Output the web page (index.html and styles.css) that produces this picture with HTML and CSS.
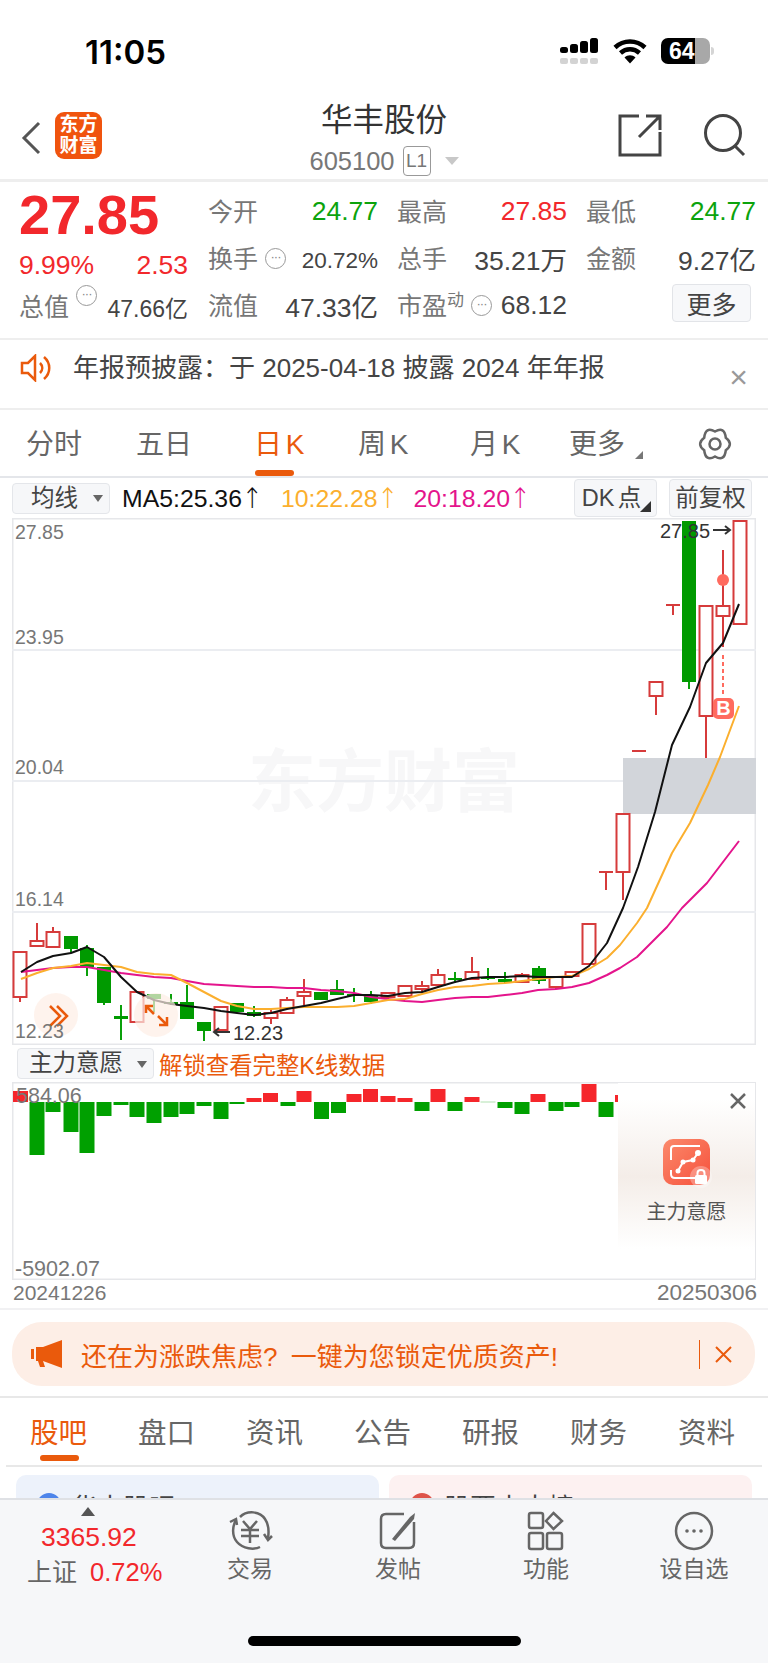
FILE: index.html
```html
<!DOCTYPE html>
<html lang="zh-CN">
<head>
    <meta charset="UTF-8">
    <meta name="viewport" content="width=device-width, initial-scale=1.0">
    <title>华丰股份 605100</title>
    <link rel="stylesheet" href="styles.css">
</head>
<body>
<div class="page">
    <!-- status bar -->
    <div class="status-bar">
        <div class="clock">11:05</div>
        <div class="status-icons">
            <div class="signal">
                <div class="signal-row">
                    <i class="s1"></i><i class="s2"></i><i class="s3"></i><i class="s4"></i>
                </div>
                <div class="signal-ghost"><i></i><i></i><i></i><i></i></div>
            </div>
            <svg class="wifi" width="34" height="26" viewBox="0 0 34 26">
                <path d="M2 9.5C10.500 1.500 23.500 1.500 32 9.500" />
                <path d="M7.500 15C13 10 21 10 26.500 15" />
                <path class="wifi-dot" d="M11.500 19.500C14.500 16.500 19.500 16.500 22.500 19.500L17 25.500Z" />
            </svg>
            <div class="battery"><span>64</span></div>
            <div class="battery-tip"></div>
        </div>
    </div>

    <!-- title -->
    <div class="header">
        <div class="header-left">
            <svg width="20" height="34" viewBox="0 0 20 34" class="back"><path d="M18 2L3 17L18 32" /></svg>
            <div class="logo">东方<br>财富</div>
        </div>
        <div class="header-center">
            <div class="stock-name">华丰股份</div>
            <div class="stock-code">
                <span>605100</span>
                <span class="level">L1</span>
                <span class="caret-down"></span>
            </div>
        </div>
        <div class="header-right">
            <svg class="icon-share" width="44" height="44" viewBox="0 0 44 44">
                <path d="M21 2H2V41H42V18" />
                <path d="M21 23L42 2M28 2H42V16" />
            </svg>
            <svg class="icon-search" width="44" height="44" viewBox="0 0 44 44">
                <circle cx="20" cy="19" r="17.500" />
                <path d="M32 32L41 41" />
            </svg>
        </div>
    </div>

    <!-- quote -->
    <div class="quote">
        <div class="quote-left">
            <div class="price">27.85</div>
            <div class="change"><span>9.99%</span><span>2.53</span></div>
            <div class="cap">
                <span class="label">总值</span><span class="info">···</span>
                <span class="val-small">47.66亿</span>
            </div>
        </div>
        <div class="quote-grid">
            <div class="cell"><span class="label">今开</span><span class="green">24.77</span></div>
            <div class="cell"><span class="label">最高</span><span class="red">27.85</span></div>
            <div class="cell"><span class="label">最低</span><span class="green">24.77</span></div>

            <div class="cell"><span class="label">换手<span class="info info-up">···</span></span><span class="val-turnover">20.72%</span></div>
            <div class="cell"><span class="label">总手</span><span>35.21万</span></div>
            <div class="cell"><span class="label">金额</span><span>9.27亿</span></div>

            <div class="cell"><span class="label">流值</span><span>47.33亿</span></div>
            <div class="cell"><span class="label">市盈<sup>动</sup><span class="info info-up">···</span></span><span>68.12</span></div>
            <div class="cell cell-more"><button class="more-btn">更多</button></div>
        </div>
    </div>

    <!-- notice -->
    <div class="notice">
        <svg width="34" height="28" viewBox="0 0 34 28" class="speaker">
            <path d="M2 9H8L15 2V26L8 19H2Z" />
            <path d="M20 9C23 12 23 16 20 19M24 3C31 9 31 19 24 25" />
        </svg>
        <div class="notice-text">年报预披露：于 2025-04-18 披露 2024 年年报</div>
        <div class="notice-close">×</div>
    </div>

    <!-- period tabs -->
    <div class="period-tabs">
        <div class="period">分时</div>
        <div class="period">五日</div>
        <div class="period active">日 K</div>
        <div class="period">周 K</div>
        <div class="period">月 K</div>
        <div class="period period-more">更多</div>
        <svg class="gear" width="36" height="36" viewBox="-18 -18 36 36">
            <path d="M0-12.500Q9.500-18 10.800-6.250Q19 0 10.800 6.250Q9.500 18 0 12.500Q-9.500 18-10.800 6.250Q-19 0-10.800-6.250Q-9.500-18 0-12.500Z" />
            <circle r="5.500" />
        </svg>
    </div>

    <!-- moving averages bar -->
    <div class="ma-bar">
        <div class="select select-ma">均线</div>
        <div class="ma ma5">MA5:25.36<em>↑</em></div>
        <div class="ma ma10">10:22.28<em>↑</em></div>
        <div class="ma ma20">20:18.20<em>↑</em></div>
        <div class="ma-btn ma-btn-dk">DK 点</div>
        <div class="ma-btn">前复权</div>
    </div>

    <!-- k line chart -->
    <svg class="kline" width="744" height="527" viewBox="12 518 744 527">
        <rect class="frame" x="12.750" y="518.750" width="742.500" height="525.500" />
        <text class="watermark" x="248" y="806">东方财富</text>
        <path class="grid" d="M12 650H756M12 781H756M12 912H756" />
        <rect class="zone" x="623" y="758" width="133" height="56" />

        <text class="axis" x="15" y="539">27.85</text>
        <text class="axis" x="15" y="644">23.95</text>
        <text class="axis" x="15" y="774">20.04</text>
        <text class="axis" x="15" y="906">16.14</text>

        <!-- falling candles -->
        <path class="wick-down" d="M71 949V953M87 945V976M104 1003V1005M121 1005V1040M154 994V1012M171 994V1005M187 985V1019M204 1031V1041M254 1006V1017M337 980V995M354 988V1002M371 991V1004M455 972V983M488 968V980M505 972V983M539 966V984M689 682V689" />
        <path class="body-down" d="M64 936h14v13h-14zM80 948h14v19h-14zM97 967h14v36h-14zM114 1016h14v3h-14zM147 994h14v5h-14zM164 1002h14v2h-14zM180 1002h14v17h-14zM197 1022h14v9h-14zM230 1003h14v9h-14zM247 1012h14v4h-14zM314 992h14v8h-14zM330 989h14v6h-14zM347 994h14v2h-14zM364 995h14v7h-14zM448 978h14v2h-14zM481 977h14v2h-14zM498 979h14v3h-14zM532 968h14v13h-14zM682 521h14v161h-14z" />

        <!-- rising candles -->
        <path class="wick-up" d="M20 997V1002M37 923V947M53 927V932M271 1009V1024M287 997V1000M304 979V1005M388 992V1001M422 981V992M438 969V975M472 957V972M522 973V983M556 987V989M606 872V890M623 872V900M656 696V715M673 605V615M706 716V758M723 550V647M599 872H613M632 751H646M666 605H680" />
        <path class="body-up" d="M13.500 952h13v45h-13zM30.500 941h13v5h-13zM46.500 932h13v15h-13zM130.500 992h13v30h-13zM214.500 1007h13v23h-13zM264.500 1013h13v5h-13zM280.500 1000h13v13h-13zM297.500 992h13v4h-13zM381.500 993h13v4h-13zM398.500 986h13v10h-13zM415.500 986h13v3h-13zM431.500 975h13v10h-13zM465.500 972h13v7h-13zM515.500 975h13v7h-13zM549.500 977h13v10h-13zM565.500 972h13v4h-13zM582.500 924h13v40h-13zM616.500 814h13v58h-13zM649.500 682h13v14h-13zM699.500 606h13v110h-13zM716.500 606h13v10h-13zM733.500 521h13v103h-13z" />

        <polyline class="line-pink" points="21,972 37,970 53,968 71,967 87,967 104,970 121,973 137,975 154,977 171,978 187,981 204,984 221,985 237,986 254,987 271,987 287,988 304,988 321,990 337,991 354,993 371,997 387,999 405,1001 422,1002 438,1000 455,998 472,997 488,997 505,995 522,993 538,990 556,989 572,987 589,983 607,975 620,968 637,957 652,942 667,927 682,908 707,883 739,841" />
        <polyline class="line-orange" points="21,979 37,973 53,968 71,966 87,963 104,965 121,967 137,972 154,974 171,975 187,983 204,992 221,1001 237,1006 254,1009 271,1009 287,1008 304,1007 321,1007 337,1007 354,1006 371,1003 388,1000 405,999 422,994 438,990 455,987 472,986 488,984 505,983 522,981 538,979 556,977 572,976 589,969 607,958 620,945 637,923 647,908 672,853 690,823 708,785 720,757 739,706" />
        <polyline class="line-black" points="21,972 37,962 53,956 71,953 87,947 104,957 121,977 137,992 154,1000 171,1004 187,1006 204,1008 221,1011 237,1013 254,1015 271,1013 287,1009 304,1006 321,1003 337,999 354,995 371,995 388,996 405,993 422,992 438,987 455,982 472,978 488,977 505,977 522,976 538,977 556,977 572,977 589,966 607,943 623,908 638,867 655,812 672,745 690,707 706,663 723,643 739,604" />

        <!-- high, low and buy marks -->
        <text class="mark" x="660" y="538">27.85</text>
        <path class="mark-arrow" d="M713 530H730M725 526L730 530L725 534" />
        <text class="mark" x="233" y="1040">12.23</text>
        <path class="mark-arrow" d="M230 1032H214M219 1028L214 1032L219 1036" />
        <circle class="buy-dot" cx="723" cy="580" r="6" />
        <path class="buy-dash" d="M723 655V697" />
        <rect class="buy-badge" x="713" y="698" width="21" height="21" rx="5" />
        <text class="buy-text" x="723.500" y="715">B</text>

        <circle class="round-btn" cx="56" cy="1015" r="22" />
        <path class="round-arrow" d="M50 1006L60 1016L50 1026M57 1006L67 1016L57 1026" />
        <circle class="round-btn" cx="156" cy="1015" r="22" />
        <path class="round-arrow" d="M146 1013V1006H153M146 1006L154 1014M167 1017V1025H159M167 1025L158 1016" />
        <text class="axis" x="15" y="1038">12.23</text>
    </svg>

    <!-- indicator selector -->
    <div class="indicator-bar">
        <div class="select select-ind">主力意愿</div>
        <div class="unlock">解锁查看完整K线数据</div>
    </div>

    <!-- indicator chart -->
    <div class="sub-chart">
        <svg class="sub-plot" width="744" height="198" viewBox="12 1082 744 198">
            <rect class="frame" x="12.750" y="1082.750" width="742.500" height="196.500" />
            <path class="bar-red" d="M13 1091h15v11h-15zM246.500 1098h15v4h-15zM263 1093h15v9h-15zM296.500 1091h15v11h-15zM346.500 1094h15v8h-15zM363 1089h15v13h-15zM380.500 1096h15v6h-15zM397.500 1098h15v4h-15zM430.500 1089h15v13h-15zM464.500 1097h15v5h-15zM530.500 1094h15v8h-15zM581.500 1084h15v18h-15zM615 1095h3v7h-3z" />
            <path class="bar-green" d="M29.500 1102h15v53h-15zM45.500 1102h15v10h-15zM63.500 1102h15v30h-15zM79.500 1102h15v51h-15zM96.500 1102h15v14h-15zM113.500 1102h15v3h-15zM129.500 1102h15v15h-15zM146.500 1102h15v21h-15zM163.500 1102h15v15h-15zM179.500 1102h15v12h-15zM196.500 1102h15v4h-15zM213.500 1102h15v17h-15zM229.500 1102h15v2h-15zM280.500 1102h15v4h-15zM314 1102h15v17h-15zM331 1102h15v11h-15zM414.500 1102h15v9h-15zM447.500 1102h15v9h-15zM497.500 1102h15v6h-15zM514.500 1102h15v12h-15zM548.500 1102h15v9h-15zM564.500 1102h15v5h-15zM598.500 1102h15v15h-15z" />
            <path class="bar-pale" d="M480.500 1101h15v2h-15z" />
            <text class="axis axis-big" x="16" y="1103">584.06</text>
            <text class="axis axis-big" x="15" y="1276">-5902.07</text>
        </svg>
        <div class="locked">
            <svg class="locked-close" width="16" height="16" viewBox="0 0 16 16"><path d="M1 1L15 15M15 1L1 15" /></svg>
            <svg class="locked-icon" width="50" height="50" viewBox="0 0 50 50">
                <defs>
                    <linearGradient id="lockBg" x1="0" y1="0" x2="1" y2="1">
                        <stop offset="0" stop-color="#fb8a6c" />
                        <stop offset="1" stop-color="#f6503b" />
                    </linearGradient>
                </defs>
                <rect width="47" height="46" rx="10" fill="url(#lockBg)" />
                <path class="lock-frame" d="M8 21V10Q8 7 11 7H37M37 39H12Q8 39 8 35V31" />
                <path class="lock-line" d="M15 32L20 23L30 21L35 14" />
                <circle class="lock-dot" cx="15" cy="32" r="2.500" />
                <circle class="lock-dot" cx="20" cy="23" r="2.500" />
                <circle class="lock-dot" cx="30" cy="21" r="2.500" />
                <circle class="lock-dot" cx="35" cy="14" r="3" />
                <circle class="lock-ring" cx="38" cy="38" r="11" />
                <rect class="lock-dot" x="32" y="36" width="12" height="9" rx="1.500" />
                <path class="lock-shackle" d="M34.500 36V34Q34.500 31 38 31Q41.500 31 41.500 34V36" />
            </svg>
            <div class="locked-name">主力意愿</div>
        </div>
    </div>

    <div class="dates"><span>20241226</span><span class="date-end">20250306</span></div>

    <!-- promo -->
    <div class="promo-wrap">
        <div class="promo">
            <svg width="32" height="28" viewBox="0 0 32 28" class="horn">
                <path d="M0 9H3V19H0ZM5 7H12L31 0V28L12 21L14 27H9L7 21H5Z" />
            </svg>
            <div class="promo-text">还在为涨跌焦虑? 一键为您锁定优质资产!</div>
            <div class="promo-close">
                <svg width="17" height="17" viewBox="0 0 17 17"><path d="M1 1L16 16M16 1L1 16" /></svg>
            </div>
        </div>
    </div>

    <!-- content tabs -->
    <div class="content-tabs">
        <div class="content-tab active">股吧</div>
        <div class="content-tab">盘口</div>
        <div class="content-tab">资讯</div>
        <div class="content-tab">公告</div>
        <div class="content-tab">研报</div>
        <div class="content-tab">财务</div>
        <div class="content-tab">资料</div>
    </div>

    <div class="cards">
        <div class="card card-blue"><i></i><span>华丰股吧</span></div>
        <div class="card card-pink"><i></i><span>股票十大榜</span></div>
    </div>

    <!-- bottom bar -->
    <div class="footer">
        <div class="index-col">
            <div class="caret-up"></div>
            <div class="index-value">3365.92</div>
            <div class="index-line"><span>上证</span><span class="index-pct">0.72%</span></div>
        </div>
        <div class="foot-item">
            <svg width="46" height="40" viewBox="0 0 46 40">
                <path d="M9 9C6 14 4 24 10 31C16 38 27 39 33 36" />
                <path d="M13 6C20-1 33 0 38 8C42 14 42 21 41 27" />
                <path class="fill-stroke" d="M3 11L9 8L10 14" />
                <path class="fill-stroke" d="M37 23L41 29L45 25" />
                <path d="M16 10L23 18L30 10M14 19H32M14 25H32M23 18V32" />
            </svg>
            <div class="foot-label">交易</div>
        </div>
        <div class="foot-item">
            <svg width="40" height="40" viewBox="0 0 40 40">
                <path d="M26 3H8Q3 3 3 8V32Q3 37 8 37H31Q36 37 36 32V11" />
                <path class="pencil" d="M14 28L32 6L37 2L36 8L17 30Z" />
            </svg>
            <div class="foot-label">发帖</div>
        </div>
        <div class="foot-item">
            <svg width="38" height="40" viewBox="0 0 38 40">
                <rect x="2" y="2" width="14" height="15" rx="2" />
                <path d="M26.500 2L35 10L26.500 18L19 10Z" />
                <rect x="2" y="22" width="14" height="16" rx="2" />
                <rect x="20" y="22" width="15" height="16" rx="2" />
            </svg>
            <div class="foot-label">功能</div>
        </div>
        <div class="foot-item">
            <svg width="40" height="40" viewBox="0 0 40 40">
                <circle cx="20" cy="20" r="18" />
                <circle class="dot" cx="13" cy="20" r="1.800" />
                <circle class="dot" cx="20" cy="20" r="1.800" />
                <circle class="dot" cx="27" cy="20" r="1.800" />
            </svg>
            <div class="foot-label">设自选</div>
        </div>
        <div class="home-bar"></div>
    </div>
</div>
</body>
</html>
```

FILE: styles.css
```css
* {
    box-sizing: border-box;
}
body {
    margin: 0;
    background: #fff;
    font-family: "Liberation Sans", "Noto Sans CJK SC", sans-serif;
    color: #444;
}
.page {
    width: 768px;
    height: 1663px;
    overflow: hidden;
    position: relative;
}

/* status bar */
.status-bar {
    height: 92px;
    display: flex;
    justify-content: space-between;
    padding: 35px 54px 0 85px;
}
.clock {
    font-family: Inter, "Liberation Sans", sans-serif;
    font-size: 33px;
    font-weight: 600;
    line-height: 34px;
    color: #000;
}
.status-icons {
    display: flex;
    align-items: flex-start;
    padding-top: 3px;
}
.signal {
    width: 38px;
    margin-right: 15px;
}
.signal-row {
    display: flex;
    align-items: flex-end;
    justify-content: space-between;
    height: 15px;
}
.signal-row i {
    width: 8px;
    background: #000;
    border-radius: 2.5px;
}
.s1 { height: 6px; }
.s2 { height: 9px; }
.s3 { height: 12px; }
.s4 { height: 15px; }
.signal-ghost {
    display: flex;
    justify-content: space-between;
    margin-top: 5px;
}
.signal-ghost i {
    width: 8px;
    height: 6px;
    background: #d3d3d3;
    border-radius: 2px;
}
.wifi {
    margin-right: 14px;
}
.wifi path {
    fill: none;
    stroke: #000;
    stroke-width: 4.5px;
}
.wifi .wifi-dot {
    fill: #000;
    stroke: none;
}
.battery {
    width: 49px;
    height: 26px;
    border-radius: 7px;
    background: linear-gradient(90deg, #000 70%, #a8a8a8 70%);
    color: #fff;
    font-size: 23px;
    font-weight: bold;
    line-height: 26px;
    padding-left: 8px;
}
.battery-tip {
    width: 3px;
    height: 8px;
    margin: 9px 0 0 1px;
    background: #d5d5d5;
    border-radius: 0 3px 3px 0;
}

/* header */
.header {
    height: 90px;
    display: grid;
    grid-template-columns: 1fr auto 1fr;
    border-bottom: 3px solid #eeeeee;
}
.header-left {
    display: flex;
    align-items: flex-start;
    padding: 20px 0 0 21px;
}
.back {
    margin: 9px 14px 0 0;
}
.back path {
    fill: none;
    stroke: #555;
    stroke-width: 3px;
}
.logo {
    width: 47px;
    height: 47px;
    background: #f0540e;
    border-radius: 9px;
    color: #fff;
    font-size: 19px;
    font-weight: bold;
    line-height: 21px;
    text-align: center;
    padding-top: 2px;
}
.header-center {
    text-align: center;
    padding-top: 9px;
}
.stock-name {
    font-size: 31.500px;
    line-height: 38px;
    color: #333;
}
.stock-code {
    display: flex;
    align-items: center;
    height: 30px;
    margin-top: 7px;
    color: #777;
    font-size: 25.500px;
}
.level {
    width: 28px;
    height: 30px;
    border: 1px solid #999;
    border-radius: 4px;
    font-size: 19px;
    line-height: 28px;
    margin: 0 14px 0 8px;
}
.caret-down {
    border-top: 8px solid #c8c8c8;
    border-left: 7px solid transparent;
    border-right: 7px solid transparent;
}
.header-right {
    display: flex;
    justify-content: flex-end;
    gap: 41px;
    padding: 22px 21px 0 0;
}
.header-right svg {
    fill: none;
    stroke: #444;
    stroke-width: 3px;
}

/* quote block */
.quote {
    height: 158px;
    display: flex;
    padding-left: 19px;
    border-bottom: 2px solid #eeeeee;
}
.quote-left {
    width: 169px;
    margin-right: 20px;
}
.price {
    font-size: 56px;
    font-weight: bold;
    line-height: 50px;
    margin-top: 8px;
    color: #f2282c;
}
.change {
    display: flex;
    justify-content: space-between;
    margin-top: 9px;
    font-size: 26.500px;
    line-height: 32px;
    color: #f2282c;
}
.cap {
    display: flex;
    align-items: center;
    margin-top: 6px;
    line-height: 36px;
}
.val-small {
    margin-left: auto;
    font-size: 23px;
    padding-top: 4px;
}
.quote-grid {
    width: 548px;
    display: grid;
    grid-template-columns: repeat(3, 170px);
    grid-auto-rows: 47px;
    column-gap: 19px;
    padding-top: 6px;
    font-size: 26.500px;
    color: #444;
}
.cell {
    display: flex;
    justify-content: space-between;
    align-items: center;
}
.cell .label {
    margin-top: -4px;
}
.label {
    font-size: 25px;
    color: #777;
    white-space: nowrap;
}
.label sup {
    font-size: 17px;
    line-height: 0;
}
.info {
    display: inline-block;
    width: 21px;
    height: 21px;
    margin-left: 7px;
    border: 1.500px solid #999;
    border-radius: 50%;
    color: #888;
    font-size: 13px;
    line-height: 15px;
    text-align: center;
    letter-spacing: -1px;
}
.cap .info {
    align-self: flex-start;
    margin-top: -2px;
}
.info-up {
    vertical-align: 7px;
}
.val-turnover {
    font-size: 22.500px;
    padding-top: 4px;
}
.green {
    color: #0ca30c;
}
.red {
    color: #f2282c;
}
.cell-more {
    justify-content: flex-end;
    padding-right: 5px;
}
.more-btn {
    width: 79px;
    height: 38px;
    margin-top: -6px;
    padding: 0;
    border: 1px solid #e2e4e8;
    border-radius: 4px;
    background: #f7f8fa;
    color: #444;
    font-family: inherit;
    font-size: 25px;
}

/* notice */
.notice {
    height: 70px;
    display: flex;
    align-items: flex-start;
    padding: 14px 20px 0 20px;
    border-bottom: 2px solid #eeeeee;
}
.speaker {
    fill: none;
    stroke: #ea5a0c;
    stroke-width: 2.500px;
    margin-right: 19px;
}
.notice-text {
    font-size: 26px;
    line-height: 28px;
    color: #444;
}
.notice-close {
    margin-left: auto;
    font-size: 32px;
    line-height: 30px;
    padding-top: 8px;
    color: #999;
}

/* period tabs */
.period-tabs {
    height: 68px;
    display: grid;
    grid-template-columns: 110px 118px 104px 112px 99px 128px auto;
    padding-left: 26px;
    border-bottom: 2px solid #e4e6ea;
    position: relative;
}
.period {
    font-size: 28px;
    line-height: 70px;
    word-spacing: -4px;
    color: #666;
}
.period.active {
    color: #ea5a0c;
    position: relative;
}
.period.active::after {
    content: "";
    position: absolute;
    left: 1px;
    bottom: 4px;
    width: 39px;
    height: 6px;
    border-radius: 3px;
    background: #ea5a0c;
}
.period-more {
    position: relative;
}
.period-more::after {
    content: "";
    position: absolute;
    left: 66px;
    top: 41px;
    border-bottom: 8px solid #777;
    border-left: 8px solid transparent;
}
.gear {
    margin-top: 16px;
    fill: none;
    stroke: #666;
    stroke-width: 2.500px;
}

/* moving averages */
.ma-bar {
    height: 40px;
    display: flex;
    align-items: center;
    padding-left: 12px;
}
.select {
    position: relative;
    background: #f6f7f9;
    border: 1px solid #e4e6ea;
    border-radius: 4px;
    color: #444;
    font-size: 23.500px;
}
.select::after {
    content: "";
    position: absolute;
    top: 50%;
    right: 6px;
    margin-top: -3px;
    border-top: 7px solid #666;
    border-left: 5px solid transparent;
    border-right: 5px solid transparent;
}
.select-ma {
    width: 98px;
    height: 31px;
    padding-left: 18px;
    line-height: 29px;
}
.ma {
    font-size: 24.800px;
    white-space: nowrap;
}
.ma em {
    font-style: normal;
    font-family: "DejaVu Sans", sans-serif;
    font-weight: 200;
    display: inline-block;
    width: 18px;
    text-align: center;
    transform: scaleY(1.150);
}
.ma5 {
    margin-left: 12px;
    color: #111;
}
.ma10 {
    margin-left: 21px;
    color: #fbaf2e;
}
.ma20 {
    margin-left: 18px;
    color: #e4148c;
}
.ma-btn {
    position: relative;
    width: 83px;
    height: 38px;
    margin-left: 12px;
    background: #f6f7f9;
    border: 1px solid #e4e6ea;
    border-radius: 4px;
    font-size: 23.500px;
    line-height: 36px;
    text-align: center;
    color: #444;
}
.ma-btn-dk {
    margin-left: auto;
    padding-right: 8px;
    word-spacing: -3px;
}
.ma-btn-dk::after {
    content: "";
    position: absolute;
    right: 5px;
    bottom: 4px;
    border-bottom: 11px solid #333;
    border-left: 11px solid transparent;
}
.ma-btn:last-child {
    margin-right: 16px;
}

/* charts */
.kline,
.sub-plot {
    display: block;
    margin-left: 12px;
}
.frame {
    fill: none;
    stroke: #e6e7ea;
    stroke-width: 1.500px;
}
.grid {
    stroke: #ebedf1;
    stroke-width: 2px;
    fill: none;
}
.zone {
    fill: #d2d5da;
}
.watermark {
    font-size: 68px;
    font-weight: bold;
    fill: #f7f7f8;
}
.axis {
    font-size: 19.500px;
    fill: #777;
}
.axis-big {
    font-size: 21.500px;
}
.wick-down {
    stroke: #0aa00a;
    stroke-width: 2px;
    fill: none;
}
.body-down {
    fill: #009a00;
}
.wick-up {
    stroke: #d63b3b;
    stroke-width: 2px;
    fill: none;
}
.body-up {
    stroke: #d63b3b;
    stroke-width: 2px;
    fill: #fff;
}
.line-black,
.line-orange,
.line-pink {
    fill: none;
    stroke-width: 2px;
    stroke-linejoin: round;
}
.line-black {
    stroke: #111;
}
.line-orange {
    stroke: #fbaf2e;
}
.line-pink {
    stroke: #e4148c;
}
.mark {
    font-size: 20px;
    fill: #333;
}
.mark-arrow {
    fill: none;
    stroke: #333;
    stroke-width: 2px;
}
.buy-dot,
.buy-badge {
    fill: #ff6b5f;
}
.buy-dash {
    stroke: #ff6b5f;
    stroke-width: 2px;
    stroke-dasharray: 4 3;
}
.buy-text {
    font-size: 20px;
    font-weight: bold;
    fill: #fff;
    text-anchor: middle;
}
.round-btn {
    fill: #fdeee6;
    fill-opacity: 0.7;
}
.round-arrow {
    fill: none;
    stroke: #ea5a0c;
    stroke-width: 2.500px;
}

/* indicator */
.indicator-bar {
    height: 37px;
    display: flex;
    align-items: center;
    padding-left: 17px;
}
.select-ind {
    width: 137px;
    height: 31px;
    padding-left: 11px;
    line-height: 29px;
    letter-spacing: 0;
}
.unlock {
    margin-left: 5px;
    color: #ea5a0c;
    font-size: 23.400px;
}
.sub-chart {
    position: relative;
    height: 198px;
}
.bar-red {
    fill: #f5262b;
}
.bar-green {
    fill: #00a000;
}
.bar-pale {
    fill: #d8f0d8;
}
.locked {
    position: absolute;
    left: 618px;
    top: 1px;
    width: 137px;
    height: 195px;
    background: linear-gradient(180deg, #fff 8%, #f4ede8 48%, #fff 85%);
    text-align: center;
    padding-top: 56px;
}
.locked-close {
    position: absolute;
    top: 10px;
    right: 9px;
    fill: none;
    stroke: #666;
    stroke-width: 2.500px;
}
.locked-icon {
    display: block;
    margin-left: 45px;
}
.lock-frame,
.lock-line,
.lock-shackle {
    fill: none;
    stroke: #fff;
    stroke-width: 2px;
}
.lock-dot {
    fill: #fff;
}
.lock-ring {
    fill: #fff;
    fill-opacity: 0.3;
}
.locked-name {
    margin-top: 10px;
    font-size: 20px;
    line-height: 26px;
    color: #555;
}
.dates {
    height: 30px;
    display: flex;
    justify-content: space-between;
    padding: 0 11px 0 13px;
    font-size: 21px;
    line-height: 26px;
    color: #777;
    border-bottom: 2px solid #f1f1f3;
}
.date-end {
    font-size: 22.500px;
}

/* promo */
.promo-wrap {
    height: 88px;
    padding: 12px 13px 0 12px;
    border-bottom: 2px solid #e8e8e8;
}
.promo {
    height: 64px;
    display: flex;
    align-items: center;
    padding: 0 23px 0 19px;
    background: #fdeee6;
    border-radius: 30px;
}
.horn {
    fill: #ea5a0c;
    margin-right: 18px;
}
.promo-text {
    font-size: 26px;
    word-spacing: 6px;
    color: #ea5a0c;
    white-space: nowrap;
}
.promo-close {
    margin-left: auto;
    height: 29px;
    display: flex;
    align-items: center;
    padding-left: 15px;
    border-left: 1.500px solid #ea5a0c;
}
.promo-close svg {
    fill: none;
    stroke: #ea5a0c;
    stroke-width: 2px;
}

/* content tabs */
.content-tabs {
    height: 69px;
    margin: 0 6px;
    display: flex;
    justify-content: space-between;
    padding: 0 27px 0 24px;
    border-bottom: 2px solid #e8e8e8;
}
.content-tab {
    position: relative;
    font-size: 28.500px;
    line-height: 70px;
    color: #666;
}
.content-tab.active {
    color: #ea5a0c;
}
.content-tab.active::after {
    content: "";
    position: absolute;
    left: 10px;
    bottom: 4px;
    width: 39px;
    height: 6px;
    border-radius: 3px;
    background: #ea5a0c;
}
.cards {
    height: 31px;
    display: flex;
    gap: 10px;
    padding: 8px 16px 0;
    overflow: hidden;
}
.card {
    flex: 1;
    height: 60px;
    display: flex;
    gap: 10px;
    padding: 18px 0 0 21px;
    border-radius: 10px;
    font-size: 26px;
    line-height: 24px;
    color: #444;
}
.card span {
    margin-top: 3px;
}
.card i {
    width: 24px;
    height: 24px;
    border-radius: 50%;
}
.card-blue {
    background: #edf2fb;
}
.card-blue i {
    background: #4d84ea;
}
.card-pink {
    background: #fdf1f1;
}
.card-pink i {
    background: #de5349;
}

/* bottom bar */
.footer {
    position: relative;
    height: 165px;
    display: grid;
    grid-template-columns: 176px repeat(4, 148px);
    background: #f6f7f9;
    border-top: 2px solid #dfe1e5;
}
.index-col {
    padding-left: 27px;
}
.caret-up {
    width: 0;
    margin: 7px 0 0 54px;
    border-bottom: 9px solid #555;
    border-left: 7px solid transparent;
    border-right: 7px solid transparent;
}
.index-value {
    margin: 6px 0 0 14px;
    font-size: 26.500px;
    line-height: 30px;
    color: #f2282c;
}
.index-line {
    display: flex;
    gap: 13px;
    margin-top: 4px;
    font-size: 25px;
    line-height: 33px;
    color: #666;
}
.index-pct {
    font-size: 25.500px;
    color: #f2282c;
}
.foot-item {
    text-align: center;
    padding-top: 11px;
}
.foot-item svg {
    display: block;
    margin: 0 auto;
    fill: none;
    stroke: #666;
    stroke-width: 2.500px;
}
.foot-item .dot,
.foot-item .pencil {
    fill: #666;
    stroke: none;
}
.foot-item .fill-stroke {
    stroke-linejoin: miter;
}
.foot-label {
    margin-top: 3px;
    font-size: 23px;
    line-height: 30px;
    color: #666;
}
.home-bar {
    position: absolute;
    left: 248px;
    top: 136px;
    width: 273px;
    height: 10px;
    border-radius: 5px;
    background: #000;
}
```
